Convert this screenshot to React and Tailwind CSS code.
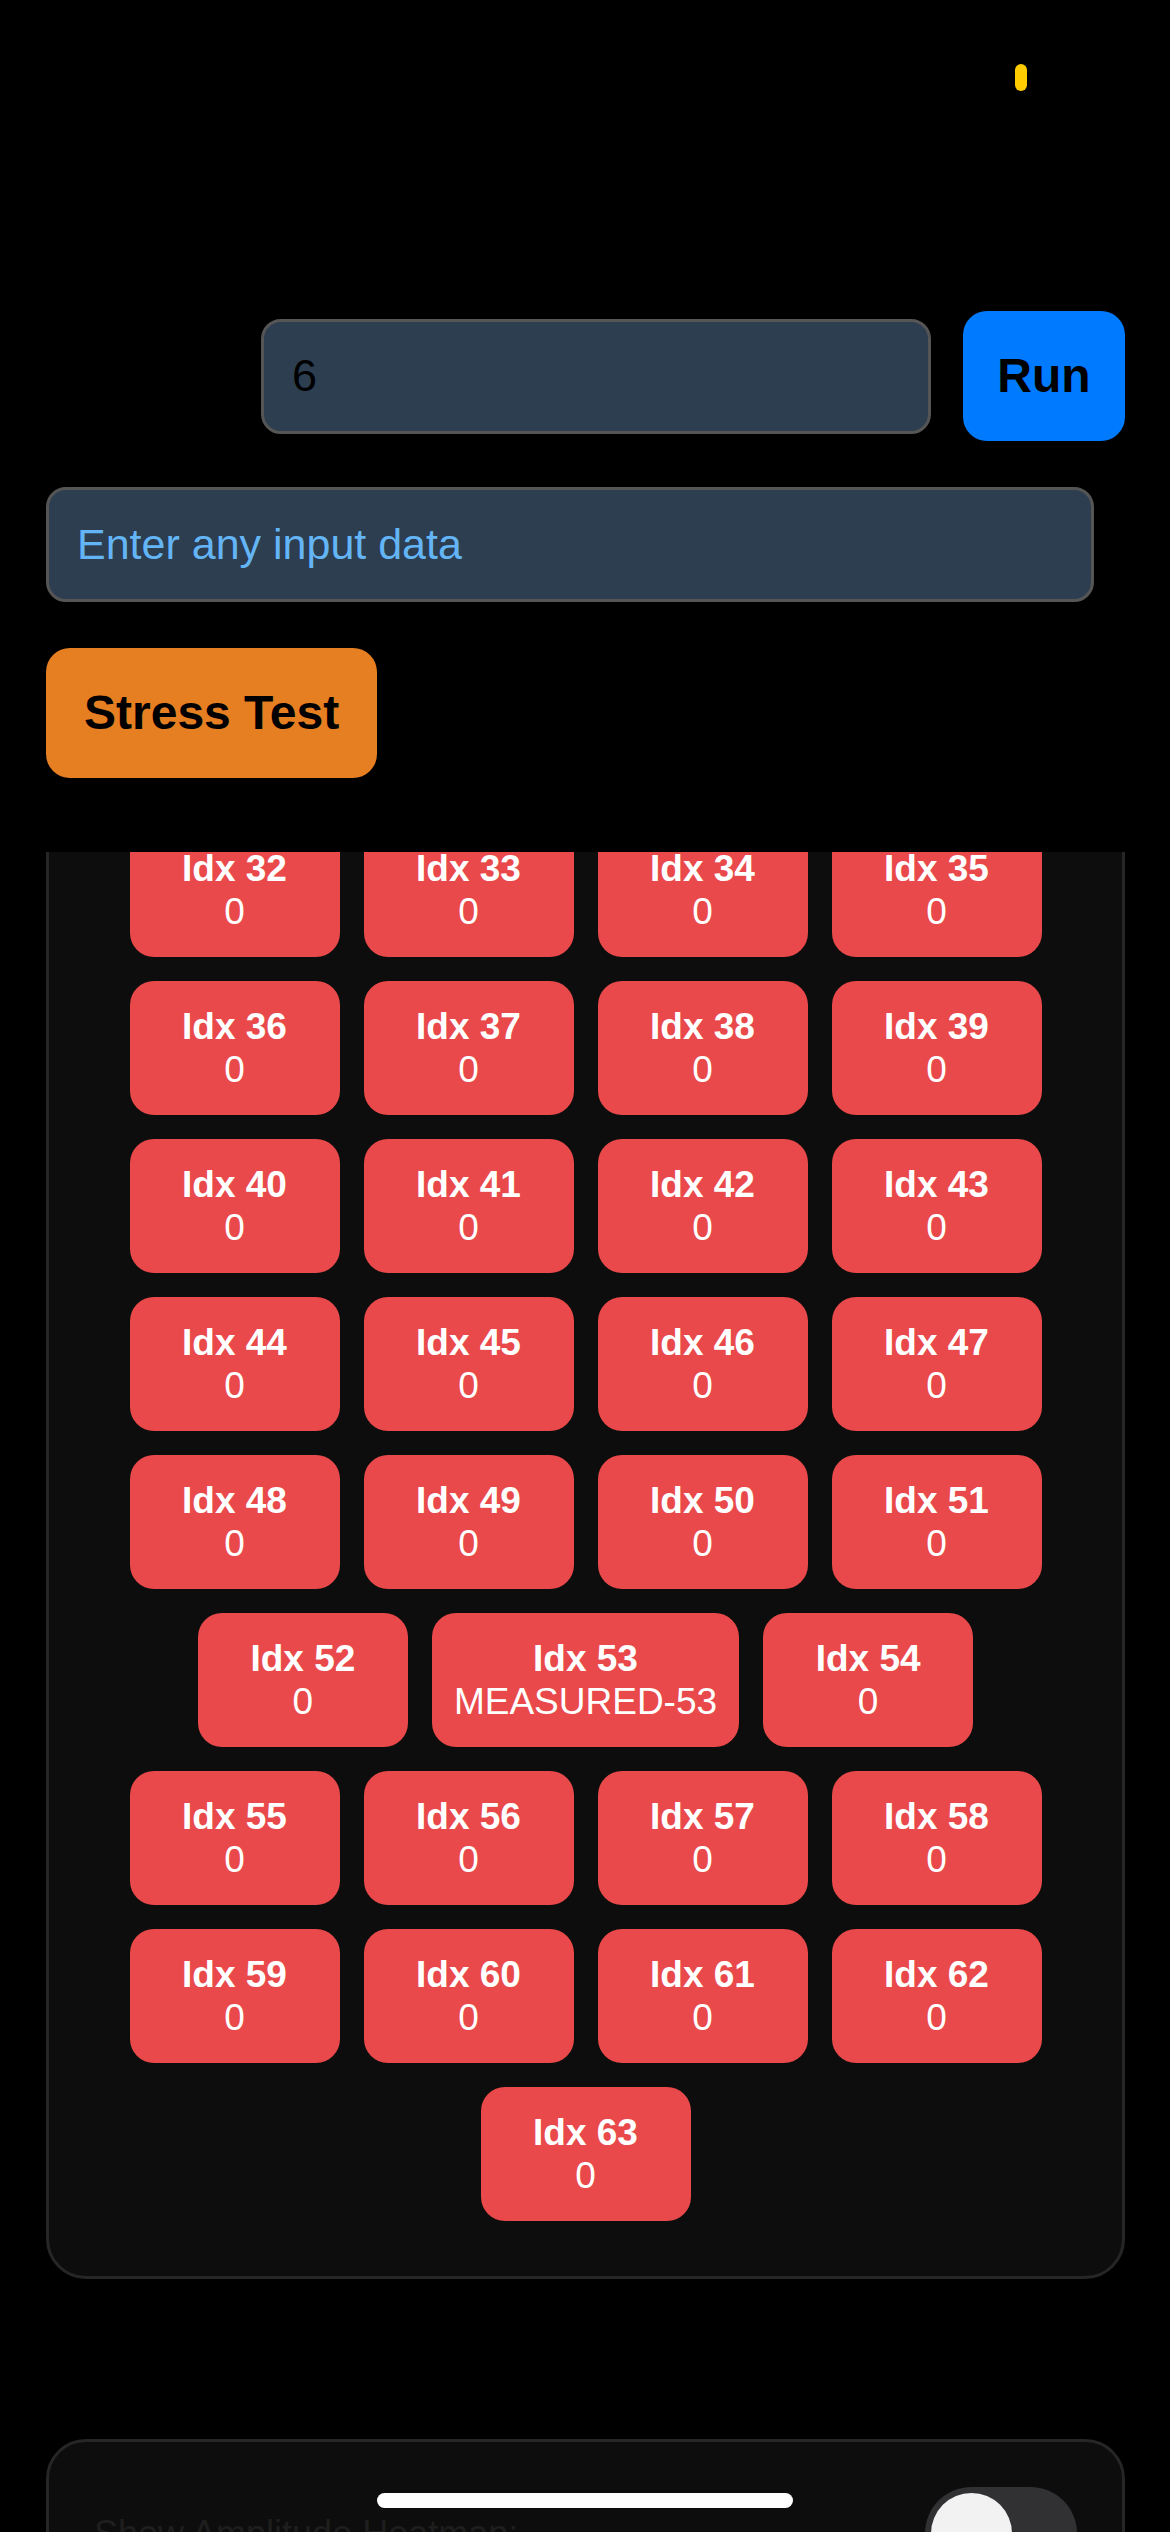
import React from "react";

const font = { fontFamily: '"Liberation Sans", Arial, sans-serif' };

function Tile({ idx, value }) {
  return (
    <div className="min-w-[210px] h-[134px] px-[22px] py-[24px] rounded-[24px] bg-[#E9494A] flex flex-col items-center text-white text-[37px] leading-[43px]">
      <div className="font-bold whitespace-nowrap">Idx {idx}</div>
      <div className="whitespace-nowrap">{value}</div>
    </div>
  );
}

export default function App() {
  const tiles = [];
  for (let i = 32; i < 64; i++) {
    tiles.push({ idx: i, value: i === 53 ? "MEASURED-53" : "0" });
  }
  return (
    <div className="min-h-screen bg-black relative" style={font}>
      {/* status indicator */}
      <div className="fixed left-[1015px] top-[64px] w-[12px] h-[27px] rounded-full bg-[#FFCC00]" />

      <div className="pt-[311px] flex flex-col">
        {/* Run row */}
        <div className="flex items-center gap-[32px] pl-[261px] pr-[45px]">
          <input
            readOnly
            defaultValue="6"
            className="flex-1 min-w-0 h-[115px] rounded-[20px] border-[3px] border-[#555555] bg-[#2C3E50] pl-[28px] text-[45px] text-black outline-none"
            style={font}
          />
          <button className="w-[162px] h-[130px] rounded-[24px] bg-[#007AFF] text-black font-bold text-[48px]">
            Run
          </button>
        </div>

        {/* data input */}
        <div className="mt-[46px] pl-[46px] pr-[76px]">
          <input
            readOnly
            placeholder="Enter any input data"
            className="w-full h-[115px] rounded-[20px] border-[3px] border-[#555555] bg-[#2C3E50] pl-[28px] text-[43px] text-white placeholder:text-[#64B5F6] outline-none"
            style={font}
          />
        </div>

        {/* stress test */}
        <div className="mt-[46px] px-[46px] flex">
          <button className="h-[130px] px-[38px] rounded-[24px] bg-[#E67E22] text-black font-bold text-[48px] whitespace-nowrap">
            Stress Test
          </button>
        </div>

        {/* scrolled results card */}
        <div className="mt-[74px] overflow-hidden">
          <div className="-mt-[80px] mx-[46px] w-[1079px] rounded-[40px] border-[3px] border-[#262626] bg-[#0D0D0D] px-[48px] pt-[48px] pb-[55px]">
            <div className="flex flex-wrap justify-center gap-[24px]">
              {tiles.map((t) => (
                <Tile key={t.idx} idx={t.idx} value={t.value} />
              ))}
            </div>
          </div>
        </div>

        {/* heatmap toggle card */}
        <div className="mt-[160px] mx-[46px] w-[1079px] rounded-[40px] border-[3px] border-[#262626] bg-[#0D0D0D] px-[45px] pt-[45px] pb-[45px]">
          <div className="flex items-center justify-between">
            <span className="text-[36px] text-[#1E1E1E]">Show Amplitude Heatmap:</span>
            <div className="relative w-[152px] h-[93px] rounded-full bg-[#313134]">
              <div className="absolute left-[6px] top-[6px] w-[81px] h-[81px] rounded-full bg-[#F2F2F2]" />
            </div>
          </div>
        </div>
        <div className="h-[200px]" />
      </div>

      {/* home indicator */}
      <div className="fixed left-[377px] top-[2493px] w-[416px] h-[15px] rounded-full bg-white" />
    </div>
  );
}
